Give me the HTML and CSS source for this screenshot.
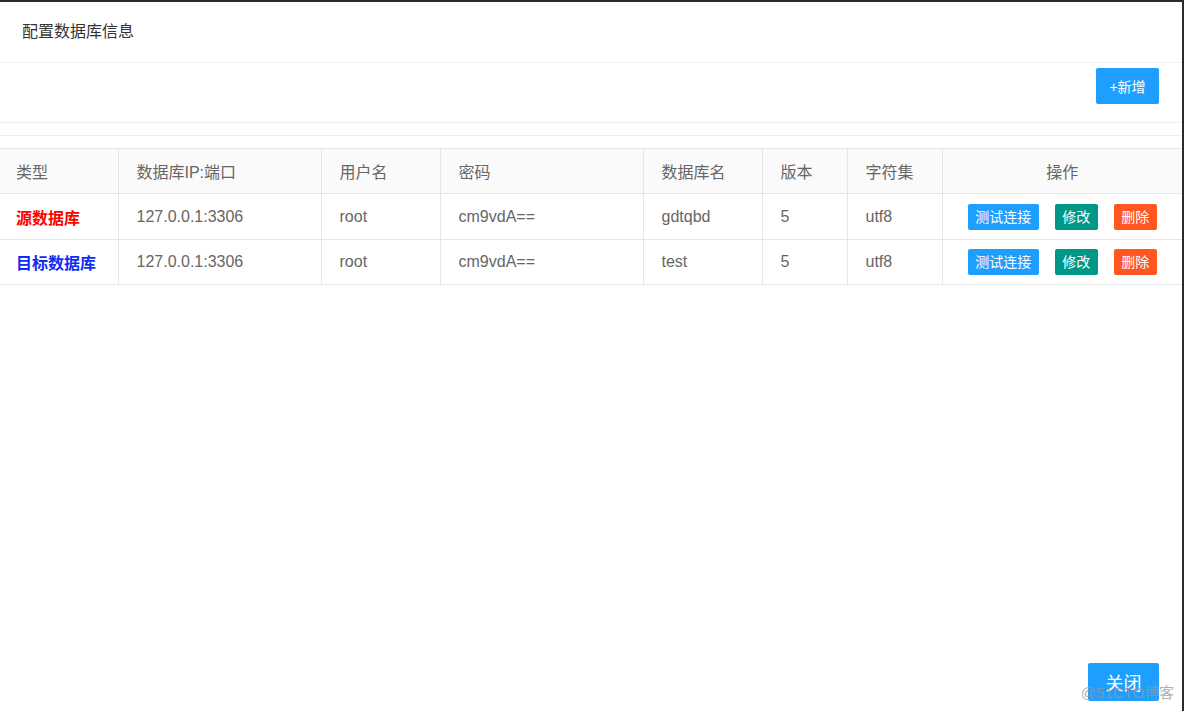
FILE: index.html
```html
<!DOCTYPE html>
<html lang="zh-CN">
<head>
<meta charset="utf-8">
<title>配置数据库信息</title>
<link rel="stylesheet" href="styles.css">
</head>
<body>
<div class="frame">
  <div class="dialog">
    <div class="title">配置数据库信息</div>
    <div class="toolbar">
      <button class="btn btn-blue btn-add">+新增</button>
    </div>
    <div class="spacer"></div>
    <div class="spacer2"></div>
    <table class="grid">
      <colgroup>
        <col style="width:118px"><col style="width:203px"><col style="width:119px"><col style="width:203px">
        <col style="width:119px"><col style="width:85px"><col style="width:95px"><col>
      </colgroup>
      <thead>
        <tr>
          <th>类型</th><th>数据库IP:端口</th><th>用户名</th><th>密码</th><th>数据库名</th><th>版本</th><th>字符集</th><th class="center">操作</th>
        </tr>
      </thead>
      <tbody>
        <tr class="first">
          <td class="type-src">源数据库</td><td>127.0.0.1:3306</td><td>root</td><td>cm9vdA==</td><td>gdtqbd</td><td>5</td><td>utf8</td>
          <td class="center ops"><span class="btn-xs bg-blue">测试连接</span><span class="btn-xs bg-teal">修改</span><span class="btn-xs bg-orange">删除</span></td>
        </tr>
        <tr>
          <td class="type-dst">目标数据库</td><td>127.0.0.1:3306</td><td>root</td><td>cm9vdA==</td><td>test</td><td>5</td><td>utf8</td>
          <td class="center ops"><span class="btn-xs bg-blue">测试连接</span><span class="btn-xs bg-teal">修改</span><span class="btn-xs bg-orange">删除</span></td>
        </tr>
      </tbody>
    </table>
    <div class="grow"></div>
    <div class="footer">
      <button class="btn btn-blue btn-close">关闭</button>
    </div>
    <div class="watermark">@51CTO博客</div>
  </div>
</div>
</body>
</html>
```

FILE: styles.css
```css
html, body {
  margin: 0;
  padding: 0;
  width: 1184px;
  height: 711px;
  overflow: hidden;
  background: #2b2b2b;
}
body {
  font-family: "Liberation Sans", Arial, "Noto Sans CJK SC", sans-serif;
}
.frame {
  padding-top: 2px;
  padding-right: 2px;
  height: 709px;
}
.dialog {
  position: relative;
  background: #fff;
  height: 709px;
  display: flex;
  flex-direction: column;
}
.title {
  height: 60px;
  line-height: 60px;
  padding-left: 22px;
  font-size: 16px;
  color: #333;
  border-bottom: 1px solid #f0f0f0;
}
.toolbar {
  height: 59px;
  border-bottom: 1px solid #eee;
  display: flex;
  justify-content: flex-end;
  align-items: flex-start;
  padding-right: 23px;
}
.btn {
  border: none;
  border-radius: 2px;
  color: #fff;
  font-family: "Liberation Sans", Arial, "Noto Sans CJK SC", sans-serif;
  cursor: pointer;
  padding: 0;
}
.btn-blue { background: #1E9FFF; }
.btn-add {
  margin-top: 5px;
  width: 63px;
  height: 36px;
  font-size: 14px;
}
.spacer {
  height: 12px;
  border-bottom: 1px solid #eee;
}
.spacer2 {
  height: 12px;
}
.grid {
  width: 1182px;
  border-collapse: collapse;
  table-layout: fixed;
  font-size: 16px;
  color: #666;
}
.grid th, .grid td {
  border: 1px solid #e6e6e6;
  height: 45px;
  padding: 0 0 0 18px;
  text-align: left;
  font-weight: normal;
  box-sizing: border-box;
}
.grid tr.first td { height: 46px; }
.grid tr > :first-child { border-left: none; padding-left: 16px; }
.grid tr > :last-child { border-right: none; }
.grid thead th { background: #fafafa; }
.grid .center { text-align: center; padding-left: 0; }
.grid td.type-src { color: #ff0000; font-weight: bold; }
.grid td.type-dst { color: #0f2cf5; font-weight: bold; }
.ops { font-size: 0; }
.btn-xs {
  display: inline-block;
  height: 26px;
  line-height: 26px;
  padding: 0 7.5px;
  font-size: 14px;
  color: #fff;
  border-radius: 2px;
  vertical-align: middle;
  margin: 0 8px;
}
.bg-blue { background: #1E9FFF; }
.bg-teal { background: #009688; }
.bg-orange { background: #FF5722; }
.grow { flex: 1; }
.footer {
  display: flex;
  justify-content: flex-end;
  padding-right: 23px;
  height: 48px;
}
.btn-close {
  width: 71px;
  height: 38px;
  font-size: 18px;
}
.watermark {
  position: absolute;
  right: 8px;
  bottom: 9px;
  font-size: 15px;
  color: rgba(150,150,150,0.75);
}
```
